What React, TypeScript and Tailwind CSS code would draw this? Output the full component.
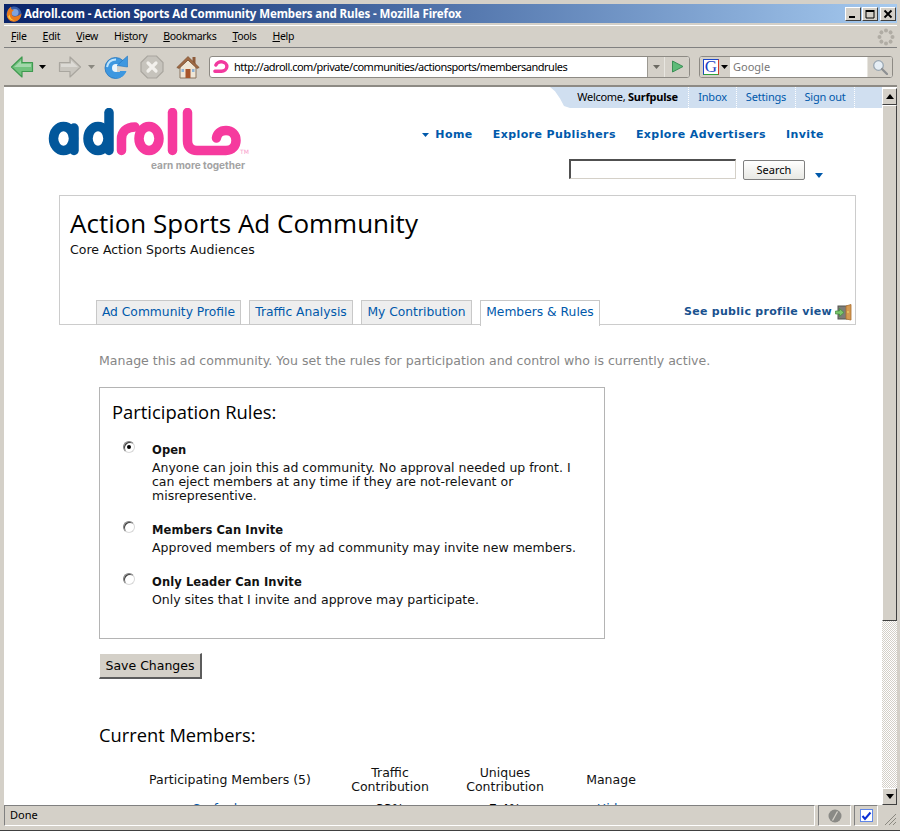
import * as React from "react";

const chromeFont = "font-['Noto_Sans',sans-serif]";

function FirefoxIcon() {
  return (
    <svg width="16" height="16" viewBox="0 0 16 16" className="shrink-0">
      <circle cx="8" cy="8" r="7.500" fill="#3a5ea8" />
      <circle cx="9" cy="6.500" r="3.500" fill="#7fa3dd" />
      <path d="M0.800 9C1 5 3 2 5 0.800C4.500 3 6 4 8 4C6 5 5 7 6 9C7.500 11.500 12 11 15.300 7.500C15.500 12 12 15.700 8 15.700C4 15.700 1.200 13 0.800 9Z" fill="#ea7a1c" />
      <path d="M2 11C3 13 6 15 9 14.500C6 14 4 12 3.500 8.500Z" fill="#fbc63f" />
    </svg>
  );
}

function WinButton({ kind }: { kind: "min" | "max" | "close" }) {
  return (
    <div className="w-[16px] h-[14px] bg-[#d4d0c8] border-t border-l border-t-white border-l-white border-r border-b border-r-[#404040] border-b-[#404040] flex items-center justify-center">
      <svg width="10" height="10" viewBox="0 0 10 10">
        {kind === "min" && <rect x="1" y="7" width="6" height="2" fill="#000" />}
        {kind === "max" && <path d="M1 1.500H9M1 1V9H9V1" fill="none" stroke="#000" strokeWidth="1" />}
        {kind === "max" && <rect x="1" y="1" width="8" height="2" fill="#000" />}
        {kind === "close" && <path d="M1.500 1.500L8.500 8.500M8.500 1.500L1.500 8.500" stroke="#000" strokeWidth="1.800" />}
      </svg>
    </div>
  );
}

function TitleBar() {
  return (
    <div className="h-[19px] shrink-0 flex items-center pl-[2px] pr-[1px] bg-gradient-to-r from-[#0a246a] to-[#a6caef]">
      <FirefoxIcon />
      <span className={`ml-[2px] flex-1 text-white font-bold text-[11.500px] tracking-[-0.1px] leading-none whitespace-nowrap ${chromeFont}`}>
        Adroll.com - Action Sports Ad Community Members and Rules - Mozilla Firefox
      </span>
      <div className="flex">
        <WinButton kind="min" />
        <div className="w-[1px]" />
        <WinButton kind="max" />
        <div className="w-[2px]" />
        <WinButton kind="close" />
      </div>
    </div>
  );
}

function MenuBar() {
  const items: [string, string, string][] = [
    ["", "F", "ile"],
    ["", "E", "dit"],
    ["", "V", "iew"],
    ["Hi", "s", "tory"],
    ["", "B", "ookmarks"],
    ["", "T", "ools"],
    ["", "H", "elp"],
  ];
  return (
    <div className="h-[23px] mt-[2px] shrink-0 border-y border-t-white border-b-[#808080] flex items-center justify-between pl-[7px] pr-[1px]">
      <div className={`flex gap-[16px] text-[10.500px] tracking-[-0.3px] text-black ${chromeFont}`}>
        {items.map(([a, u, b]) => (
          <span key={a + u + b}>
            {a}
            <span className="underline">{u}</span>
            {b}
          </span>
        ))}
      </div>
      <svg width="18" height="18" viewBox="0 0 18 18" className="mr-[1px]">
        {[0, 45, 90, 135, 180, 225, 270, 315].map((d) => (
          <circle key={d} cx="9" cy="2.500" r="2" fill="#b0aca4" transform={`rotate(${d} 9 9)`} />
        ))}
      </svg>
    </div>
  );
}

function Caret({ color }: { color: string }) {
  return (
    <svg width="7" height="4" viewBox="0 0 7 4">
      <path d="M0 0H7L3.500 4Z" fill={color} />
    </svg>
  );
}

function ArrowIcon({ fill, stroke, flip }: { fill: string; stroke: string; flip?: boolean }) {
  return (
    <svg width="24" height="24" viewBox="0 0 24 24" className={flip ? "-scale-x-100" : ""}>
      <path d="M1.500 12L12 2V7.500H22.500V16.500H12V22Z" fill={fill} stroke={stroke} strokeWidth="1.200" strokeLinejoin="round" />
      <path d="M4 12L11 5.500V9H21V12Z" fill="#fff" opacity="0.35" />
    </svg>
  );
}

function ReloadIcon() {
  return (
    <svg width="24" height="24" viewBox="0 0 24 24">
      <circle cx="11.500" cy="13" r="10.500" fill="#3d97e0" stroke="#2273bd" strokeWidth="0.800" />
      <path d="M3 12C4 6.500 8 4.500 12 4.500" fill="none" stroke="#bfe3fa" strokeWidth="2" />
      <circle cx="12" cy="13" r="4" fill="#eaf5fd" />
      <path d="M13 11H24V17H13Z" fill="#d4d0c8" />
      <path d="M13 10.500L23.500 1V12Z" fill="#3d97e0" stroke="#2273bd" strokeWidth="0.600" />
      <path d="M16 16H22.500C21 20.500 17 23.500 11.500 23.500C15 21 15.500 19 16 16Z" fill="#3d97e0" />
    </svg>
  );
}

function StopIcon() {
  return (
    <svg width="24" height="24" viewBox="0 0 24 24">
      <path d="M7.500 1H16.500L23 7.500V16.500L16.500 23H7.500L1 16.500V7.500Z" fill="#c6c3bc" stroke="#a9a69f" strokeWidth="1.200" />
      <path d="M8 8L16 16M16 8L8 16" stroke="#f2f0ec" strokeWidth="3.200" strokeLinecap="round" />
    </svg>
  );
}

function HomeIcon() {
  return (
    <svg width="24" height="24" viewBox="0 0 24 24">
      <rect x="16.500" y="2" width="3" height="7" fill="#8d5b3a" />
      <path d="M4 12V23H20V12L12 5Z" fill="#efe6d6" stroke="#8a7560" strokeWidth="1" />
      <path d="M0.800 12.500L12 1.500L23.200 12.500L21 13.500L12 5L3 13.500Z" fill="#a06a45" stroke="#74492c" strokeWidth="0.600" />
      <rect x="9.500" y="14" width="5" height="9" fill="#a8552a" />
      <rect x="5.500" y="14" width="2.500" height="3" fill="#8db3d8" />
      <rect x="16" y="14" width="2.500" height="3" fill="#8db3d8" />
    </svg>
  );
}

function Curl() {
  return (
    <svg width="17" height="15" viewBox="0 0 17 15">
      <path d="M3 6A6 5 0 1 1 9 12.500H2" fill="none" stroke="#f23a9f" strokeWidth="3.600" strokeLinecap="round" />
    </svg>
  );
}

function GoogleIcon() {
  return (
    <div className="w-[16px] h-[16px] bg-white relative overflow-hidden border-t border-l border-t-[#1a46c9] border-l-[#1a46c9] border-b border-r border-b-[#2fa13a] border-r-[#d43c2c] flex items-center justify-center">
      <span className="font-['Liberation_Serif',serif] text-[17px] leading-none text-[#1a3fc4]">G</span>
    </div>
  );
}

function NavBar() {
  return (
    <div className="h-[37px] shrink-0 flex items-center pl-[6px] pr-[4px] relative">
      <ArrowIcon fill="#72c27e" stroke="#3f9a50" />
      <div className="ml-[5px]">
        <Caret color="#000" />
      </div>
      <div className="ml-[12px]">
        <ArrowIcon fill="#c9c6bf" stroke="#a9a69f" flip />
      </div>
      <div className="ml-[6px]">
        <Caret color="#8a8880" />
      </div>
      <div className="ml-[9px]">
        <ReloadIcon />
      </div>
      <div className="ml-[12px]">
        <StopIcon />
      </div>
      <div className="ml-[12px]">
        <HomeIcon />
      </div>
      <div className="ml-[9px] w-[481px] h-[22px] border border-[#8d8a84] rounded-[3px] flex items-stretch bg-white overflow-hidden">
        <div className="w-[19px] flex items-center justify-center pl-[3px] shrink-0">
          <Curl />
        </div>
        <span className={`ml-[5px] flex-1 text-[11px] tracking-[-0.5px] leading-[20px] whitespace-nowrap text-black ${chromeFont}`}>
          http://adroll.com/private/communities/actionsports/membersandrules
        </span>
        <div className="w-[17px] bg-[#d4d0c8] border-l border-[#9c9992] flex items-center justify-center">
          <Caret color="#6b6962" />
        </div>
        <div className="w-[25px] bg-[#d4d0c8] border-l border-[#e8e6e0] flex items-center justify-center">
          <svg width="13" height="13" viewBox="0 0 13 13">
            <path d="M1.500 1L12 6.500L1.500 12Z" fill="#5dbb78" stroke="#3a8f55" strokeWidth="1" />
          </svg>
        </div>
      </div>
      <div className="ml-[9px] w-[194px] h-[22px] border border-[#8d8a84] rounded-[3px] flex items-stretch overflow-hidden bg-white">
        <div className="w-[30px] bg-[#d4d0c8] flex items-center gap-[2px] pl-[3px]">
          <GoogleIcon />
          <Caret color="#000" />
        </div>
        <span className={`flex-1 pl-[3px] text-[11px] leading-[20px] text-[#777] ${chromeFont}`}>Google</span>
        <div className="w-[25px] bg-[#d4d0c8] border-l border-[#e8e6e0] flex items-center justify-center">
          <svg width="16" height="16" viewBox="0 0 16 16">
            <circle cx="6.500" cy="6.500" r="4.800" fill="#e6eef5" stroke="#9aa7b2" strokeWidth="1.300" />
            <path d="M10 10L15 15" stroke="#8c8f92" strokeWidth="2.200" strokeLinecap="round" />
          </svg>
        </div>
      </div>
    </div>
  );
}

function Logo() {
  return (
    <div className="w-[205px]">
      <svg width="205" height="51" viewBox="0 0 205 51" className="block">
        <g fill="none" stroke="#02579b" strokeWidth="9.500" strokeLinecap="round">
          <ellipse cx="18.500" cy="30.500" rx="10" ry="12" />
          <path d="M29 20V42.500" />
          <ellipse cx="53" cy="30.500" rx="10" ry="12" />
          <path d="M64 4.500V42.500" />
        </g>
        <g fill="none" stroke="#f63a9e" strokeWidth="9.500" strokeLinecap="round">
          <path d="M76.500 42.500V31C76.500 24 81 19 90 19" />
          <ellipse cx="104" cy="30.500" rx="10" ry="12" />
          <path d="M127.500 4.500V42.500" />
          <path d="M142.500 4.500V33C142.500 39 146 42.500 152 42.500H181C187 42.500 191 38 191 32.500C191 26.500 186.500 22.500 181 22.500C175 22.500 172 26 171.500 30" />
        </g>
        <text x="195" y="46" fontSize="6" fill="#f89bcb" fontFamily="'DejaVu Sans',sans-serif">TM</text>
      </svg>
      <div className="text-right pr-[5px] text-[10px] leading-[12px] font-bold text-[#a3a3a3] font-['Inter',sans-serif]">
        earn more together
      </div>
    </div>
  );
}

function TopStrip() {
  const sep = "border-r border-dotted border-white h-[21px] flex items-center tracking-[-0.2px]";
  return (
    <div className="flex justify-end h-[21px]">
      <div className={`h-[21px] w-[332px] bg-[#d0dff0] flex items-center text-[11px] ${chromeFont} [clip-path:polygon(0_0,100%_0,100%_100%,20px_100%,14px_90%,10px_55%,5px_20%)]`}>
        <div className={`${sep} w-[139px] pr-[10px] text-black justify-end whitespace-nowrap`}>
          <span>
            <span className="tracking-[-0.3px]">Welcome, </span>
            <b>Surfpulse</b>
          </span>
        </div>
        <div className={`${sep} w-[48px] justify-center text-[#0059ab]`}>Inbox</div>
        <div className={`${sep} w-[59px] justify-center text-[#0059ab]`}>Settings</div>
        <div className={`${sep} w-[59px] justify-center text-[#0059ab]`}>Sign out</div>
      </div>
    </div>
  );
}

function Header() {
  return (
    <div className="flex justify-between h-[87px] pl-[41px] pr-[58px]">
      <Logo />
      <div className="flex flex-col items-end">
        <div className="flex items-center h-[14px] mt-[20px] text-[11px] font-bold text-[#0059ab] tracking-[0.42px] gap-[20px]">
          <span className="flex items-center gap-[6px]">
            <Caret color="#0059ab" />
            Home
          </span>
          <span>Explore Publishers</span>
          <span>Explore Advertisers</span>
          <span>Invite</span>
        </div>
        <div className="flex items-start mt-[17px]">
          <div className="w-[167px] h-[20px] bg-white border-t-2 border-l-2 border-t-[#505050] border-l-[#505050] border-r border-b border-r-[#d4d0c8] border-b-[#d4d0c8]" />
          <div className={`ml-[7px] mt-[1px] w-[62px] h-[20px] pt-[1px] bg-gradient-to-b from-white to-[#e8e8e4] border border-[#7f7f7f] rounded-[2px] flex items-center justify-center text-[11px] text-black ${chromeFont}`}>
            Search
          </div>
          <div className="ml-[10px] mr-[1px] mt-[14px] leading-none flex">
            <svg width="8" height="5" viewBox="0 0 8 5">
              <path d="M0 0H8L4 5Z" fill="#0059ab" />
            </svg>
          </div>
        </div>
      </div>
    </div>
  );
}

function DoorIcon() {
  return (
    <svg width="17" height="17" viewBox="0 0 17 17">
      <rect x="3" y="2" width="9" height="13" fill="#7d7d78" stroke="#56564f" strokeWidth="1" />
      <path d="M11 2L16 0.500V16L11 15Z" fill="#d59a52" stroke="#a86c2e" strokeWidth="0.800" />
      <rect x="12.500" y="7" width="1" height="2" fill="#f5e06a" />
      <path d="M0.500 7H4.500V4.500L9 8.500L4.500 12.500V10H0.500Z" fill="#7cc66b" stroke="#3f8b3a" strokeWidth="0.700" />
    </svg>
  );
}

function Tab({ label, active, w }: { label: string; active?: boolean; w: string }) {
  return (
    <div
      className={`${w} h-[25px] border border-[#c8c8c8] flex items-center justify-center text-[12.300px] text-[#0059ab] pb-[1px] ${
        active ? "bg-white border-b-0 -mb-[1px] h-[26px] pb-[2px]" : "bg-[#eeeeee]"
      }`}
    >
      {label}
    </div>
  );
}

function CommunityBox() {
  return (
    <div className="ml-[55px] w-[797px] h-[130px] border border-[#cccccc] flex flex-col">
      <div className="pl-[10px] flex-1">
        <h1 className="mt-[11px] text-[26px] leading-[32px] text-black font-['Open_Sans',sans-serif]">Action Sports Ad Community</h1>
        <p className="text-[12.500px] leading-[18px] mt-[2px] text-[#111]">Core Action Sports Audiences</p>
      </div>
      <div className="flex items-end pl-[36px] pr-[3px] gap-[8px] -mb-[1px]">
        <Tab label="Ad Community Profile" w="w-[145px]" />
        <Tab label="Traffic Analysis" w="w-[104px]" />
        <Tab label="My Contribution" w="w-[111px]" />
        <Tab label="Members & Rules" w="w-[120px]" active />
        <div className="ml-auto flex items-center h-[25px] gap-[3px] pb-[1px] text-[11px] font-bold text-[#19528f] tracking-[0.3px]">
          See public profile view
          <DoorIcon />
        </div>
      </div>
    </div>
  );
}

function Radio({ on }: { on?: boolean }) {
  return (
    <div className="w-[12px] h-[12px] rounded-full bg-white border border-t-[#808080] border-l-[#808080] border-r-[#d8d8d8] border-b-[#d8d8d8] shadow-[inset_1px_1px_0_#404040] flex items-center justify-center shrink-0">
      {on && <div className="w-[4px] h-[4px] rounded-full bg-black" />}
    </div>
  );
}

function Rule({ on, title, lines, className }: { on?: boolean; title: string; lines: string[]; className: string }) {
  return (
    <div className={`flex pl-[11px] ${className}`}>
      <div className="w-[29px] shrink-0 -mt-[2px]">
        <Radio on={on} />
      </div>
      <div>
        <div className="text-[11.500px] leading-[14px] font-bold text-[#111] tracking-[0.1px]">{title}</div>
        <div className="mt-[4px] text-[12.500px] leading-[14px] text-[#111]">
          {lines.map((l) => (
            <div key={l} className="whitespace-nowrap">
              {l}
            </div>
          ))}
        </div>
      </div>
    </div>
  );
}

function RulesBox() {
  return (
    <div className="w-[506px] h-[252px] border border-[#b4b4b4] pl-[12px]">
      <h2 className="mt-[12px] text-[18.400px] leading-[24px] text-black font-['Open_Sans',sans-serif]">Participation Rules:</h2>
      <Rule
        on
        className="mt-[19px]"
        title="Open"
        lines={[
          "Anyone can join this ad community. No approval needed up front. I",
          "can eject members at any time if they are not-relevant or",
          "misrepresentive.",
        ]}
      />
      <Rule className="mt-[20px]" title="Members Can Invite" lines={["Approved members of my ad community may invite new members."]} />
      <Rule className="mt-[20px]" title="Only Leader Can Invite" lines={["Only sites that I invite and approve may participate."]} />
    </div>
  );
}

function MembersTable() {
  const head = "text-[12.500px] leading-[14px] text-center text-[#111]";
  const cell = "mt-[8px] text-[12.500px] leading-[14px] text-center";
  return (
    <div className="ml-[41px] mt-[17px] w-[532px] grid grid-cols-[180px_140px_90px_122px] items-center">
      <div className={head}>Participating Members (5)</div>
      <div className={head}>
        Traffic
        <br />
        Contribution
      </div>
      <div className={head}>
        Uniques
        <br />
        Contribution
      </div>
      <div className={head}>Manage</div>
      <div className={`${cell} text-[#0059ab] pr-[16px]`}>Surfpulse</div>
      <div className={cell}>33%</div>
      <div className={cell}>7.4%</div>
      <div className={`${cell} text-[#0059ab]`}>Hide</div>
    </div>
  );
}

function Page() {
  return (
    <div className="flex-1 min-w-0 overflow-hidden bg-white font-['DejaVu_Sans',sans-serif]">
      <TopStrip />
      <Header />
      <CommunityBox />
      <div className="ml-[95px]">
        <p className="mt-[28px] text-[12.550px] leading-[16px] text-[#868686] whitespace-nowrap">
          Manage this ad community. You set the rules for participation and control who is currently active.
        </p>
        <div className="mt-[18px]">
          <RulesBox />
        </div>
        <div className="mt-[14px] w-[103px] h-[26px] pt-[2px] bg-[#d4d0c8] border-t border-l border-t-white border-l-white border-r-2 border-b-2 border-r-[#5c5c5c] border-b-[#5c5c5c] flex items-center justify-center text-[12.500px] text-black">
          Save Changes
        </div>
        <h2 className="mt-[42px] text-[18.300px] leading-[28px] text-black font-['Open_Sans',sans-serif]">Current Members:</h2>
        <MembersTable />
      </div>
    </div>
  );
}

function ScrollButton({ up }: { up?: boolean }) {
  return (
    <div className="h-[17px] shrink-0 bg-[#d4d0c8] border-t border-l border-t-white border-l-white border-r border-b border-r-[#404040] border-b-[#404040] flex items-center justify-center">
      <svg width="8" height="5" viewBox="0 0 8 5" className={up ? "" : "rotate-180"}>
        <path d="M4 0L8 5H0Z" fill="#000" />
      </svg>
    </div>
  );
}

function Scrollbar() {
  return (
    <div className="w-[15px] shrink-0 flex flex-col pt-[1px]">
      <ScrollButton up />
      <div className="h-[516px] shrink-0 bg-[#d4d0c8] border-t border-l border-t-white border-l-white border-r border-b border-r-[#404040] border-b-[#404040]" />
      <div className="flex-1 bg-[repeating-conic-gradient(#d4d0c8_0_25%,#ffffff_0_50%)] bg-[length:2px_2px]" />
      <ScrollButton />
    </div>
  );
}

function StatusBar() {
  const panel = "border border-t-[#808080] border-l-[#808080] border-r-white border-b-white h-full";
  return (
    <div className={`h-[22px] shrink-0 flex items-stretch pb-[1px] text-[11px] text-black ${chromeFont}`}>
      <div className={`${panel} w-[811px] pl-[5px] leading-[18px]`}>Done</div>
      <div className={`${panel} w-[33px] ml-[3px] flex items-center justify-center`}>
        <svg width="14" height="14" viewBox="0 0 14 14">
          <circle cx="7" cy="7" r="6.500" fill="#8a8a86" />
          <path d="M4.500 11.500L9.500 2.500" stroke="#d4d0c8" strokeWidth="1.300" />
        </svg>
      </div>
      <div className={`${panel} w-[24px] ml-[3px] flex items-center justify-center`}>
        <div className="w-[13px] h-[13px] bg-white border border-[#5f86e8] flex items-center justify-center">
          <svg width="11" height="11" viewBox="0 0 11 11">
            <path d="M1.500 6L4 9L9.500 2.500" fill="none" stroke="#0a2fd6" strokeWidth="2" />
          </svg>
        </div>
      </div>
      <svg width="13" height="13" viewBox="0 0 13 13" className="self-end ml-[6px]">
        <path d="M12 1L1 12M12 5L5 12M12 9L9 12" stroke="#8a8880" strokeWidth="1" />
      </svg>
    </div>
  );
}

export default function App() {
  return (
    <div className="w-[900px] h-[831px] overflow-hidden bg-[#d4d0c8] p-[4px] pb-[3px] pr-[3px] flex flex-col border-b border-[#404040]">
      <TitleBar />
      <MenuBar />
      <NavBar />
      <div className="flex-1 min-h-0 flex border-t-2 border-[#8d8a84] bg-white">
        <Page />
        <Scrollbar />
      </div>
      <StatusBar />
    </div>
  );
}
